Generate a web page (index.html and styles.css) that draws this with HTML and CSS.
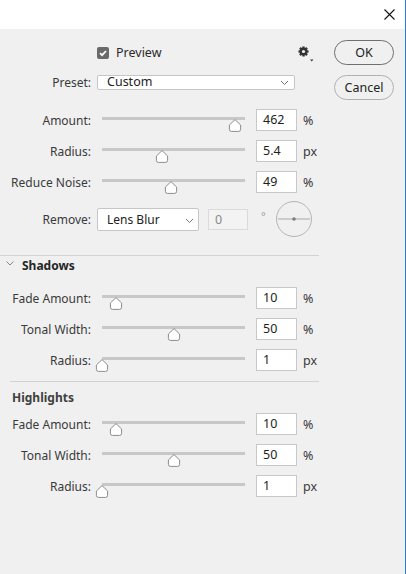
FILE: index.html
```html
<!DOCTYPE html>
<html>
<head>
<meta charset="utf-8">
<link rel="stylesheet" href="styles.css">
</head>
<body>
<div class="window">
  <div class="titlebar">
    <span class="close"><svg width="11" height="11" viewBox="0 0 11 11"><path d="M0.5 0.5L10.5 10.5M10.5 0.5L0.5 10.5" stroke="#111" stroke-width="1.1" fill="none"/></svg></span>
  </div>
  <div class="main">
    <div class="left">
      <div class="preview-row">
        <span class="checkbox"><svg width="12" height="12" viewBox="0 0 12 12"><path d="M3 6.2L5.1 8.2L9 4" stroke="#fff" stroke-width="1.8" fill="none"/></svg></span>
        <span class="preview-label">Preview</span>
        <span class="gear"><svg width="17" height="17" viewBox="0 0 17 17">
          <g fill="#333" transform="translate(5.5 5.5)">
            <rect x="-1.2" y="-5" width="2.4" height="10"/>
            <rect x="-1.2" y="-5" width="2.4" height="10" transform="rotate(45)"/>
            <rect x="-1.2" y="-5" width="2.4" height="10" transform="rotate(90)"/>
            <rect x="-1.2" y="-5" width="2.4" height="10" transform="rotate(135)"/>
            <circle r="3.8"/>
          </g>
          <circle cx="5.5" cy="5.5" r="1.6" fill="#f0f0f0"/>
          <path d="M12 13.5H15.5L13.75 15.5Z" fill="#333"/>
        </svg></span>
      </div>

      <div class="row preset-row">
        <span class="lbl">Preset:</span>
        <div class="select preset"><span>Custom</span><svg class="chev" width="9" height="6" viewBox="0 0 9 6"><path d="M1 1L4.5 4.5L8 1" stroke="#777" stroke-width="1" fill="none"/></svg></div>
      </div>

      <div class="row srow first-slider">
        <span class="lbl">Amount:</span>
        <div class="slider"><div class="track"></div><svg class="thumb" style="left:93%" width="14" height="13" viewBox="0 0 14 13"><path d="M7 0.6L12.6 6V10.4Q12.6 12.4 10.6 12.4H3.4Q1.4 12.4 1.4 10.4V6Z" fill="#fff" stroke="#8c8c8c" stroke-width="1"/></svg></div>
        <span class="num">462</span><span class="unit">%</span>
      </div>
      <div class="row srow">
        <span class="lbl">Radius:</span>
        <div class="slider"><div class="track"></div><svg class="thumb" style="left:42%" width="14" height="13" viewBox="0 0 14 13"><path d="M7 0.6L12.6 6V10.4Q12.6 12.4 10.6 12.4H3.4Q1.4 12.4 1.4 10.4V6Z" fill="#fff" stroke="#8c8c8c" stroke-width="1"/></svg></div>
        <span class="num">5.4</span><span class="unit">px</span>
      </div>
      <div class="row srow">
        <span class="lbl">Reduce Noise:</span>
        <div class="slider"><div class="track"></div><svg class="thumb" style="left:48%" width="14" height="13" viewBox="0 0 14 13"><path d="M7 0.6L12.6 6V10.4Q12.6 12.4 10.6 12.4H3.4Q1.4 12.4 1.4 10.4V6Z" fill="#fff" stroke="#8c8c8c" stroke-width="1"/></svg></div>
        <span class="num">49</span><span class="unit">%</span>
      </div>

      <div class="row remove-row">
        <span class="lbl">Remove:</span>
        <div class="select blur"><span>Lens Blur</span><svg class="chev" width="9" height="6" viewBox="0 0 9 6"><path d="M1 1L4.5 4.5L8 1" stroke="#777" stroke-width="1" fill="none"/></svg></div>
        <span class="num disabled">0</span>
        <span class="degree">°</span>
        <svg class="angle" width="38" height="38" viewBox="0 0 38 38"><circle cx="19" cy="19" r="17.5" fill="none" stroke="#b4b4b4" stroke-width="1"/><path d="M3 19H35" stroke="#b4b4b4" stroke-width="1.2"/><circle cx="19" cy="19" r="1.8" fill="#808080"/></svg>
      </div>

      <div class="sep sep-full"></div>
      <div class="section-head shadows-head">
        <svg class="head-chev" width="8" height="5" viewBox="0 0 8 5"><path d="M0.5 0.5L4 4L7.5 0.5" stroke="#888" stroke-width="1" fill="none"/></svg>
        <span>Shadows</span>
      </div>

      <div class="row srow group-first">
        <span class="lbl">Fade Amount:</span>
        <div class="slider"><div class="track"></div><svg class="thumb" style="left:10%" width="14" height="13" viewBox="0 0 14 13"><path d="M7 0.6L12.6 6V10.4Q12.6 12.4 10.6 12.4H3.4Q1.4 12.4 1.4 10.4V6Z" fill="#fff" stroke="#8c8c8c" stroke-width="1"/></svg></div>
        <span class="num">10</span><span class="unit">%</span>
      </div>
      <div class="row srow">
        <span class="lbl">Tonal Width:</span>
        <div class="slider"><div class="track"></div><svg class="thumb" style="left:50%" width="14" height="13" viewBox="0 0 14 13"><path d="M7 0.6L12.6 6V10.4Q12.6 12.4 10.6 12.4H3.4Q1.4 12.4 1.4 10.4V6Z" fill="#fff" stroke="#8c8c8c" stroke-width="1"/></svg></div>
        <span class="num">50</span><span class="unit">%</span>
      </div>
      <div class="row srow">
        <span class="lbl">Radius:</span>
        <div class="slider"><div class="track"></div><svg class="thumb" style="left:0%" width="14" height="13" viewBox="0 0 14 13"><path d="M7 0.6L12.6 6V10.4Q12.6 12.4 10.6 12.4H3.4Q1.4 12.4 1.4 10.4V6Z" fill="#fff" stroke="#8c8c8c" stroke-width="1"/></svg></div>
        <span class="num">1</span><span class="unit">px</span>
      </div>

      <div class="sep sep-inset"></div>
      <div class="section-head highlights-head"><span>Highlights</span></div>

      <div class="row srow group-first2">
        <span class="lbl">Fade Amount:</span>
        <div class="slider"><div class="track"></div><svg class="thumb" style="left:10%" width="14" height="13" viewBox="0 0 14 13"><path d="M7 0.6L12.6 6V10.4Q12.6 12.4 10.6 12.4H3.4Q1.4 12.4 1.4 10.4V6Z" fill="#fff" stroke="#8c8c8c" stroke-width="1"/></svg></div>
        <span class="num">10</span><span class="unit">%</span>
      </div>
      <div class="row srow">
        <span class="lbl">Tonal Width:</span>
        <div class="slider"><div class="track"></div><svg class="thumb" style="left:50%" width="14" height="13" viewBox="0 0 14 13"><path d="M7 0.6L12.6 6V10.4Q12.6 12.4 10.6 12.4H3.4Q1.4 12.4 1.4 10.4V6Z" fill="#fff" stroke="#8c8c8c" stroke-width="1"/></svg></div>
        <span class="num">50</span><span class="unit">%</span>
      </div>
      <div class="row srow">
        <span class="lbl">Radius:</span>
        <div class="slider"><div class="track"></div><svg class="thumb" style="left:0%" width="14" height="13" viewBox="0 0 14 13"><path d="M7 0.6L12.6 6V10.4Q12.6 12.4 10.6 12.4H3.4Q1.4 12.4 1.4 10.4V6Z" fill="#fff" stroke="#8c8c8c" stroke-width="1"/></svg></div>
        <span class="num">1</span><span class="unit">px</span>
      </div>
    </div>
    <div class="right">
      <div class="btn ok">OK</div>
      <div class="btn cancel">Cancel</div>
    </div>
  </div>
</div>
</body>
</html>
```

FILE: styles.css
```css
* { box-sizing: border-box; }
html, body { margin: 0; padding: 0; }
body {
  font-family: "Noto Sans", "Open Sans", sans-serif;
  font-size: 12px;
  color: #3a3a3a;
  background: #f0f0f0;
}
.window {
  width: 406px;
  height: 574px;
  background: #f0f0f0;
  border-right: 1px solid #2b7bd2;
  display: flex;
  flex-direction: column;
}
.titlebar {
  height: 29px;
  background: #fff;
  display: flex;
  justify-content: flex-end;
  padding: 9px 10px 0 0;
}
.close { display: block; width: 11px; height: 11px; line-height: 0; }
.main { display: flex; flex: 1; }
.left { width: 319px; display: flex; flex-direction: column; }
.right { margin-left: 15px; padding-top: 11px; display: flex; flex-direction: column; }

.btn {
  width: 60px;
  height: 25px;
  border-radius: 13px;
  display: flex;
  align-items: center;
  justify-content: center;
  font-size: 12.5px;
  color: #222;
  background: #f0f0f0;
}
.ok { border: 1px solid #707070; }
.cancel { border: 1px solid #b0b0b0; margin-top: 10px; }

.preview-row {
  margin-top: 11px;
  height: 25px;
  display: flex;
  align-items: center;
  padding-left: 97px;
  padding-right: 4px;
}
.checkbox {
  width: 12px; height: 12px;
  background: #6a6a6a;
  border-radius: 2px;
  line-height: 0;
}
.preview-label { margin-left: 7px; color: #2a2a2a; font-size: 12.5px; }
.gear { margin-left: auto; line-height: 0; width: 17px; height: 17px; margin-top: 3px; }

.row { display: flex; align-items: center; }
.lbl { width: 91px; flex: none; text-align: right; white-space: nowrap; }

.preset-row { margin-top: 10px; height: 15px; }
.select {
  background: #fff;
  border: 1px solid #c6c6c6;
  border-radius: 2px;
  display: flex;
  align-items: center;
  padding-left: 9px;
  color: #222;
  margin-left: 6px;
}
.select .chev { margin-left: auto; }
.preset { width: 198px; height: 15px; padding-right: 5px; font-size: 12.5px; }
.preset span { line-height: 13px; margin-top: -2px; }
.blur { width: 102px; height: 23px; padding-right: 4px; }
.blur .chev { margin-top: 3px; }

.srow { height: 22px; margin-top: 9px; }
.first-slider { margin-top: 19px; }
.group-first { margin-top: 13px; }
.group-first2 { margin-top: 7px; }

.slider {
  width: 143px;
  height: 22px;
  margin-left: 11px;
  position: relative;
  align-self: flex-start;
}
.track { margin-top: 8px; height: 3px; background: #c8c8c8; }
.thumb { position: absolute; top: 10px; margin-left: -7px; }

.num {
  width: 41px;
  height: 22px;
  margin-left: 11px;
  background: #fff;
  border: 1px solid #c8c8c8;
  padding-left: 6px;
  line-height: 20px;
  color: #1e1e1e;
  font-size: 12.5px;
}
.unit { margin-left: 6px; font-size: 12.5px; }

.remove-row { margin-top: 8px; height: 36px; }
.num.disabled {
  width: 40px;
  height: 21px;
  margin-left: 9px;
  background: #f3f3f3;
  border-color: #dadada;
  color: #8a8a8a;
  line-height: 19px;
}
.degree { align-self: flex-start; margin-top: 8px; margin-left: 13px; width: 6px; color: #999; font-size: 11px; line-height: 14px; }
.angle { margin-left: 8px; }

.sep { height: 1px; background: #d2d2d2; }
.sep-full { margin-top: 18px; width: 319px; }
.sep-inset { margin-top: 10px; margin-left: 10px; width: 309px; }

.section-head {
  height: 18px;
  display: flex;
  align-items: center;
  font-weight: bold;
  color: #262626;
}
.shadows-head { padding-left: 6px; }
.shadows-head span { margin-left: 8px; }
.head-chev { margin-top: -3px; }
.highlights-head { padding-left: 12px; margin-top: 6px; color: #404040; }
```
